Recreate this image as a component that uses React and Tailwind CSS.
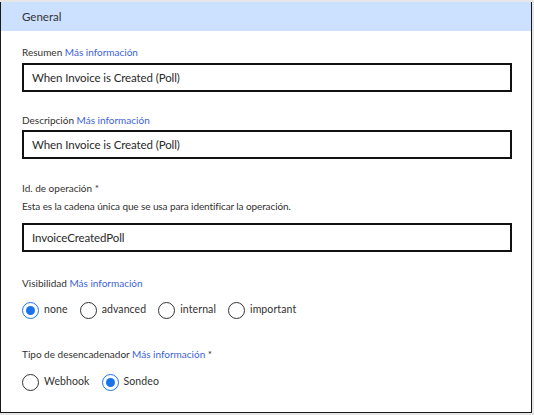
import React, { useState } from 'react';

const font = { fontFamily: 'Lato, "Open Sans", sans-serif' };

const Link = () => <span className="text-[#3b63d9]">Más información</span>;

const Radio = ({ label, checked, onClick }) => (
  <button type="button" onClick={onClick} className="flex items-center h-[18px]">
    {checked ? (
      <span className="w-[17px] h-[17px] rounded-full border-[1.5px] border-[#1a73e8] flex items-center justify-center">
        <span className="w-[9px] h-[9px] rounded-full bg-[#1a73e8]" />
      </span>
    ) : (
      <span className="w-[17px] h-[17px] rounded-full border border-[#333]" />
    )}
    <span className="ml-[5px] text-[10.5px] tracking-[0.1px] text-[#323130]">{label}</span>
  </button>
);

const TextInput = ({ value, className = '' }) => (
  <div className={`h-[29px] border-2 border-[#111] flex items-center pl-[8px] text-[11.5px] tracking-[-0.1px] text-[#2a2a2a] ${className}`}>
    {value}
  </div>
);

const Label = ({ children, className = '' }) => (
  <div className={`h-[16px] leading-[16px] text-[10px] text-[#323130] ${className}`}>{children}</div>
);

export default function App() {
  const [visibility, setVisibility] = useState('none');
  const [trigger, setTrigger] = useState('Sondeo');

  return (
    <div className="w-[534px] h-[415px] bg-[#e6e6e6] pt-[2px] pr-[2px] pb-[2px]" style={font}>
      <div className="h-full bg-white border-l border-r border-b border-[#1a1a1a] flex flex-col">
        <div className="h-[29px] bg-[#cce1ff] px-[21px] flex items-center text-[11.5px] text-[#333]">General</div>

        <div className="pl-[21px] pr-[19px] pt-[13px]">
          <Label>
            Resumen <Link />
          </Label>
          <TextInput value="When Invoice is Created (Poll)" className="mt-[3px]" />

          <Label className="mt-[20px]">
            Descripción <Link />
          </Label>
          <TextInput value="When Invoice is Created (Poll)" className="mt-[2px]" />

          <Label className="mt-[21px]">Id. de operación *</Label>
          <Label className="mt-[2px] tracking-[-0.1px]">
            Esta es la cadena única que se usa para identificar la operación.
          </Label>
          <TextInput value="InvoiceCreatedPoll" className="mt-[9px]" />

          <Label className="mt-[23px]">
            Visibilidad <Link />
          </Label>
          <div className="mt-[10px] flex items-center gap-[12px]">
            {['none', 'advanced', 'internal', 'important'].map((v) => (
              <Radio key={v} label={v} checked={visibility === v} onClick={() => setVisibility(v)} />
            ))}
          </div>

          <Label className="mt-[27px]">
            Tipo de desencadenador <Link /> *
          </Label>
          <div className="mt-[11px] flex items-center gap-[12px]">
            {['Webhook', 'Sondeo'].map((v) => (
              <Radio key={v} label={v} checked={trigger === v} onClick={() => setTrigger(v)} />
            ))}
          </div>
        </div>
      </div>
    </div>
  );
}
